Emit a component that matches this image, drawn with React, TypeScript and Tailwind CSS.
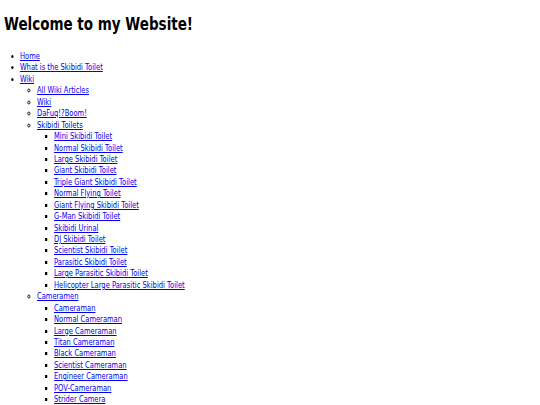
const toilets = [
  "Mini Skibidi Toilet",
  "Normal Skibidi Toilet",
  "Large Skibidi Toilet",
  "Giant Skibidi Toilet",
  "Triple Giant Skibidi Toilet",
  "Normal Flying Toilet",
  "Giant Flying Skibidi Toilet",
  "G-Man Skibidi Toilet",
  "Skibidi Urinal",
  "DJ Skibidi Toilet",
  "Scientist Skibidi Toilet",
  "Parasitic Skibidi Toilet",
  "Large Parasitic Skibidi Toilet",
  "Helicopter Large Parasitic Skibidi Toilet",
];

const cameramen = [
  "Cameraman",
  "Normal Cameraman",
  "Large Cameraman",
  "Titan Cameraman",
  "Black Cameraman",
  "Scientist Cameraman",
  "Engineer Cameraman",
  "POV-Cameraman",
  "Strider Camera",
];

function Link({ children }: { children: React.ReactNode }) {
  return (
    <a href="#" className="text-[#0000ee] underline">
      {children}
    </a>
  );
}

function SubList({ items }: { items: string[] }) {
  return (
    <ul className="list-[square] pl-[22.7px]">
      {items.map((item) => (
        <li key={item}>
          <Link>{item}</Link>
        </li>
      ))}
    </ul>
  );
}

export default function App() {
  return (
    <div className="h-[405px] overflow-hidden bg-white">
      {/* the page reads as squeezed sideways, so the whole sheet is narrowed */}
      <div className="w-[720px] origin-top-left scale-x-75 px-[5.3px] pt-[12px] text-black font-['DejaVu_Sans',sans-serif]">
        <h1 className="text-[18px] font-bold leading-[24px] mb-[15px]">Welcome to my Website!</h1>
        <ul className="list-disc pl-[21.3px] text-[9px] leading-[11.43px]">
          <li>
            <Link>Home</Link>
          </li>
          <li>
            <Link>What is the Skibidi Toilet</Link>
          </li>
          <li>
            <Link>Wiki</Link>
            <ul className="list-[circle] pl-[22.7px]">
              <li>
                <Link>All Wiki Articles</Link>
              </li>
              <li>
                <Link>Wiki</Link>
              </li>
              <li>
                <Link>DaFuq!?Boom!</Link>
              </li>
              <li>
                <Link>Skibidi Toilets</Link>
                <SubList items={toilets} />
              </li>
              <li>
                <Link>Cameramen</Link>
                <SubList items={cameramen} />
              </li>
            </ul>
          </li>
        </ul>
      </div>
    </div>
  );
}
